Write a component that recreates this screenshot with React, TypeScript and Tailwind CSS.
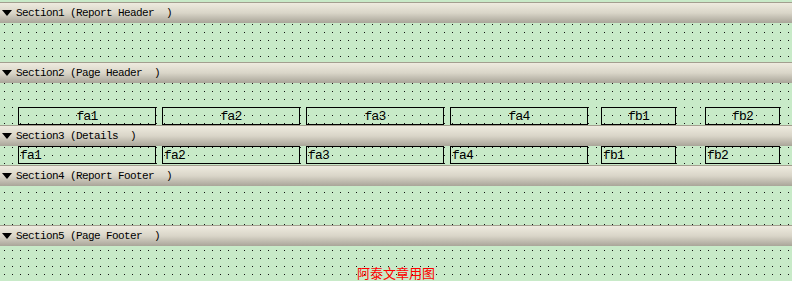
import type { ReactNode } from "react";

const headerFields = [
  { name: "fa1", w: "w-[138px]", ml: "ml-0" },
  { name: "fa2", w: "w-[138px]", ml: "ml-[6px]" },
  { name: "fa3", w: "w-[138px]", ml: "ml-[6px]" },
  { name: "fa4", w: "w-[138px]", ml: "ml-[6px]" },
  { name: "fb1", w: "w-[75px]", ml: "ml-[13px]" },
  { name: "fb2", w: "w-[75px]", ml: "ml-[29px]" },
];

function Band({ title }: { title: string }) {
  return (
    <div className="h-[21px] border-t border-[#a39e8f] bg-linear-to-b from-[#eeebdf] via-[#d9d5c8] to-[#a9a599] flex items-center">
      <svg width="10" height="6" viewBox="0 0 10 6" className="ml-[2px] mr-[4px]">
        <polygon points="0,0 10,0 5,6" fill="#000" />
      </svg>
      <span className="whitespace-pre text-[11px] tracking-[-0.6px] text-black leading-none">{title}</span>
    </div>
  );
}

function Dots({ className, children }: { className: string; children?: ReactNode }) {
  return (
    <div
      className={
        "bg-[conic-gradient(at_1px_1px,transparent_75%,#111_0)] bg-size-[8px_8px] " + className
      }
    >
      {children}
    </div>
  );
}

export default function App() {
  return (
    <div className="w-[792px] h-[281px] overflow-hidden bg-[#c8eac8] flex flex-col font-['Liberation_Mono',monospace]">
      <div className="h-[2px]" />
      <Band title="Section1 (Report Header  )" />
      <Dots className="h-[39px] bg-position-[4px_1px]" />
      <Band title="Section2 (Page Header  )" />
      <Dots className="h-[42px] bg-position-[4px_0px] flex items-end pl-[18px]">
        {headerFields.map((f) => (
          <div
            key={f.name}
            className={`${f.w} ${f.ml} h-[18px] border border-black flex items-center justify-center text-[13px] tracking-[-0.8px] text-black leading-none`}
          >
            {f.name}
          </div>
        ))}
      </Dots>
      <Band title="Section3 (Details  )" />
      <Dots className="h-[19px] bg-position-[4px_1px] flex items-start pl-[18px]">
        {headerFields.map((f) => (
          <div
            key={f.name}
            className={`${f.w} ${f.ml} h-[18px] border border-black flex items-center pl-[1px] text-[13px] tracking-[-0.8px] text-black leading-none`}
          >
            {f.name}
          </div>
        ))}
      </Dots>
      <Band title="Section4 (Report Footer  )" />
      <Dots className="h-[39px] bg-position-[4px_6px]" />
      <Band title="Section5 (Page Footer  )" />
      <Dots className="flex-1 bg-position-[4px_4px] flex items-end justify-center">
        <span className="text-[13px] leading-none mb-[2px] text-[#ff0000] font-['Noto_Sans_CJK_SC',sans-serif]">
          阿泰文章用图
        </span>
      </Dots>
    </div>
  );
}
